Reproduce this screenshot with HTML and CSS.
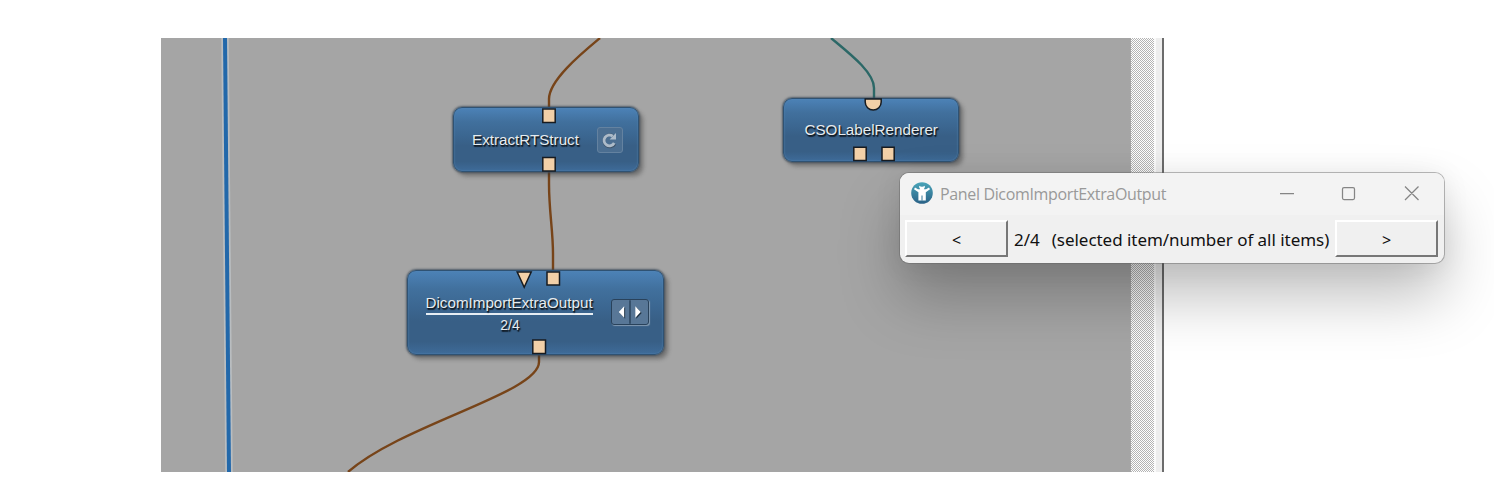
FILE: index.html
```html
<!DOCTYPE html>
<html lang="en">
<head>
<meta charset="utf-8">
<title>Network</title>
<link rel="stylesheet" href="styles.css">
</head>
<body>
<div class="workspace">
  <main class="network">
    <svg class="wires" width="970" height="434" viewBox="161 38 970 434">
      <path class="rail-edge" d="M225 38 L229 472"/>
      <path class="rail" d="M225 38 L229 472"/>
      <path class="wire" d="M600 38 C582 53 549 80 549 99 V112"/>
      <path class="wire" d="M549 166 V184 C549 211 553 230 553 254 V274"/>
      <path class="wire" d="M539 350 V362 C539 393 403 424 348 472"/>
      <path class="wire wire-cso" d="M831 38 C849 53 874 72 874 88 V102"/>
    </svg>
    <section class="node extract">
      <span class="label">ExtractRTStruct</span>
      <span class="tool reload">
        <svg width="24" height="24" viewBox="0 0 24 24"><path class="reload-shade" d="M17 16A6 6 0 1 1 15.5 8"/><path class="reload-arc" d="M16.2 15A5.4 5.400 0 1 1 14.8 8.200"/><path class="reload-head" d="M18 5V11.4H11.6Z"/></svg>
      </span>
      <svg class="ports" width="186" height="65" viewBox="453 107 186 65"><path d="M542.8 109H555.2V122.5H542.8ZM542.8 157.5H555.2V171H542.8Z"/></svg>
    </section>
    <section class="node dicom">
      <div class="caption"><span class="label">DicomImportExtraOutput</span><span class="count">2/4</span></div>
      <span class="tool step">
        <svg width="37" height="24" viewBox="0 0 37 24"><path class="step-split" d="M18.5 0V24"/><path class="step-shade" d="M13.5 7V19L8 13ZM25 7V19L30.5 13Z"/><path class="step-arrow" d="M12.5 6V18L7 12ZM24 6V18L29.5 12Z"/></svg>
      </span>
      <svg class="ports" width="257" height="85" viewBox="407 270 257 85"><path d="M517.2 272H531.2L524.2 287.3ZM547 272H559.5V285H547ZM532.8 340H545.5V353.5H532.8Z"/></svg>
    </section>
    <section class="node cso">
      <span class="label">CSOLabelRenderer</span>
      <svg class="ports" width="176" height="64" viewBox="783 98 176 64"><path d="M865.2 99H881.2V102A8 8 0 0 1 865.2 102ZM853.8 147.2H866.2V160.5H853.8ZM882 147.2H894.2V160.5H882Z"/></svg>
    </section>
  </main>
  <div class="scroll-track"></div>
  <div class="frame-edge"></div>
</div>
<div class="panel">
  <header class="titlebar">
    <svg class="logo" width="22" height="22" viewBox="0 0 22 22"><defs><linearGradient id="logo-fill" x2="0" y2="1"><stop stop-color="#4aa5b9"/><stop offset="1" stop-color="#2b6287"/></linearGradient></defs><circle cx="11" cy="11" r="10.8" fill="url(#logo-fill)"/><path fill="#fff" d="M8.200 3.800Q11 5.600 13.800 3.800V5.600L12.800 7.200H15L18 5.500L19 7.200L14.800 10.200V18.600H7.400V10.200L3 7.200L4 5.500L7 7.200H9.200L8.200 5.600Z"/><path stroke="#347899" d="M11 13.500V18.600"/></svg>
    <span class="title">Panel DicomImportExtraOutput</span>
    <svg class="controls" width="140" height="16" viewBox="0 0 140 16"><path d="M0 8.5H14M62.5 4a1.5 1.5 0 0 1 1.5-1.5H73A1.5 1.5 0 0 1 74.500 4V13A1.500 1.500 0 0 1 73 14.500H64A1.500 1.500 0 0 1 62.500 13ZM125 1.500L138.500 15M138.500 1.500L125 15"/></svg>
  </header>
  <div class="panel-body">
    <button class="nav">&lt;</button>
    <span class="value">2/4</span>
    <span class="hint">(selected item/number of all items)</span>
    <button class="nav">&gt;</button>
  </div>
</div>
</body>
</html>
```
FILE: styles.css
```css
* { box-sizing: border-box; }
body {
  margin: 0;
  height: 478px;
  padding: 38px 0 0 161px;
  overflow: hidden;
  background: #fff;
  font-family: "Liberation Sans", Arial, sans-serif;
}
.workspace { display: flex; width: 1003px; height: 434px; }
.network { position: relative; flex: 1; background: #a5a5a5; overflow: hidden; }
.wires, .ports { display: block; }
.rail-edge { stroke: #b9bdc0; stroke-width: 7.5; }
.rail { stroke: #2268aa; stroke-width: 4; }
.wire { fill: none; stroke: #774419; stroke-width: 2.4; }
.wire-cso { stroke: #2c6867; }
.node {
  position: absolute;
  display: flex;
  align-items: center;
  border: 1.5px solid #2f5273;
  border-radius: 9px;
  background: linear-gradient(#4c82b7 0, #41709d 22%, #3b6690 45%, #385f86 60%, #385f86 85%, #3e6b99 100%);
  box-shadow: 0 0 2px 1px rgba(60, 75, 90, .8), 4px 4px 4px rgba(40, 40, 40, .4), inset 0 0 2px #5585b1;
}
.extract { left: 292px; top: 69px; width: 186px; height: 65px; padding-left: 18px; }
.dicom { left: 246px; top: 232px; width: 257px; height: 85px; padding-left: 17.5px; }
.cso { left: 622px; top: 60px; width: 176px; height: 64px; padding-left: 20.5px; }
.ports { position: absolute; left: -1px; top: -1px; }
.ports path { fill: #f2d0a8; stroke: #171b20; stroke-width: 1.5; }
.label, .count {
  color: #e6ecf0;
  font-size: 15.2px;
  line-height: 18px;
  white-space: nowrap;
  text-shadow: 1px 1px 1px #101820, 1px 2px 1px #152332;
}
.caption { display: flex; flex-direction: column; align-items: center; padding-top: 3px; }
.caption .label { height: 22px; line-height: 20px; border-bottom: 2px solid #e7eef4; }
.count { font-size: 14px; line-height: 20px; padding-left: 2px; }
.tool {
  display: flex;
  height: 26px;
  border: 1.5px solid #6985a2;
  border-radius: 3px;
  background: #587797;
}
.reload { width: 26px; margin-left: 18px; background: #4b6e91; border-color: #6482a0; }
.step { width: 38px; margin: 0 0 2px 18px; border-color: #29425b; box-shadow: 1px 1px 1px #839bb2; }
.reload-shade, .reload-arc { fill: none; stroke: #3e5369; stroke-width: 2.8; }
.reload-arc, .reload-head { stroke: #adbbc9; }
.reload-head { fill: #adbbc9; stroke: none; }
.step-split { stroke: #29425b; stroke-width: 1.5; }
.step-shade { fill: #1d3042; }
.step-arrow { fill: #fff; }
.scroll-track {
  width: 23px;
  background: conic-gradient(#b4b4b4 25%, #fff 0 50%, #b4b4b4 0 75%, #fff 0) 0 0 / 2px 2px;
}
.frame-edge {
  width: 10px;
  border-left: 2px solid #fafafa;
  border-right: 2px solid #6c6c6c;
  background: #eee;
}
.panel {
  position: absolute;
  left: 900px;
  top: 173px;
  width: 544px;
  height: 90px;
  border-radius: 9px;
  background: #f0f0f0;
  box-shadow: 0 0 0 1px rgba(100, 100, 100, .45), 0 34px 60px rgba(0, 0, 0, .25), 0 2px 28px rgba(0, 0, 0, .08);
}
.titlebar {
  display: flex;
  align-items: center;
  height: 42px;
  padding: 0 24px 2px 11px;
  border-radius: 9px 9px 0 0;
  background: #f3f3f3;
}
.title { margin: 2px 0 0 7px; color: #999; font: 16px/24px "Open Sans", sans-serif; letter-spacing: -.35px; white-space: nowrap; }
.controls { margin-left: auto; fill: none; stroke: #858585; stroke-width: 1.25; }
.panel-body { display: flex; align-items: center; height: 48px; padding: 0 6px 2px 5px; color: #111; font: 17px/22px "Noto Sans", sans-serif; white-space: nowrap; }
.nav {
  width: 103px;
  height: 37px;
  padding: 3px 0 0;
  flex: none;
  border: solid;
  border-width: 2px;
  border-color: #fff #777 #777 #fff;
  background: #f0f0f0;
  color: #111;
  font: 16px "Noto Sans", sans-serif;
}
.value { margin-left: 6px; padding-top: 3px; }
.hint { margin-left: 12px; margin-right: auto; padding-top: 3px; letter-spacing: -.04px; }
```
